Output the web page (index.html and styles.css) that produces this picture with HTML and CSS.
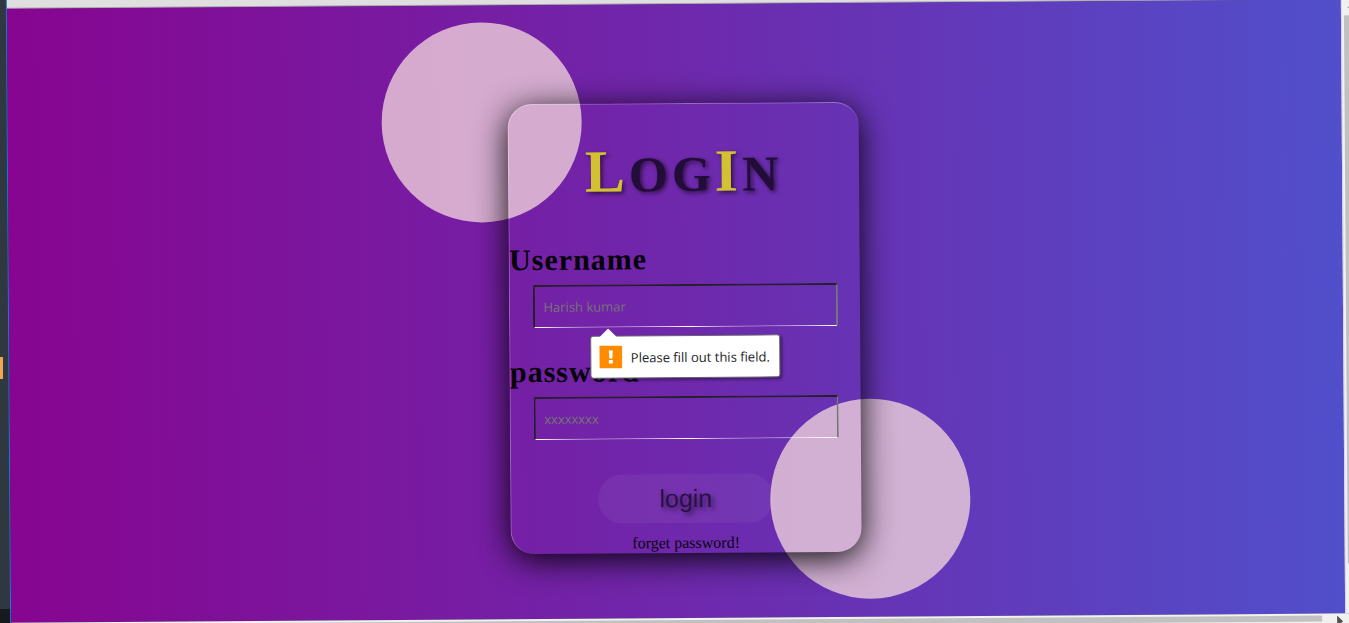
FILE: index.html
```html
<!DOCTYPE html>
<html lang="en">
<head>
<meta charset="utf-8">
<title>Login</title>
<link rel="stylesheet" href="styles.css">
</head>
<body>
<div class="desktop">
  <div class="edge-marker"></div>
  <div class="edge-foot"></div>
</div>
<div class="window">
  <div class="toolbar"></div>
  <main class="page">
    <div class="stage">
      <div class="circle circle-top"></div>
      <div class="circle circle-bottom"></div>
      <form class="card">
        <h1 class="title"><span class="accent">L</span>OG<span class="accent">I</span>N</h1>
        <label class="label" for="username">Username</label>
        <div class="field">
          <input class="input" id="username" type="text" placeholder="Harish kumar" required>
          <div class="tooltip" role="alert">
            <svg class="arrow" width="18" height="9" viewBox="0 0 18 9"><path d="M0 9 9 0 18 9Z" fill="#fff"/></svg>
            <svg class="warn" width="23" height="23" viewBox="0 0 23 23"><rect width="23" height="23" rx="1" fill="#ff8c00"/><path d="M9.500 5h4l-.5 8h-3zM9.500 14.500h4v3.500h-4z" fill="#fff"/></svg>
            <span>Please fill out this field.</span>
          </div>
        </div>
        <label class="label" for="password">password</label>
        <div class="field">
          <input class="input" id="password" type="password" placeholder="xxxxxxxx" required>
        </div>
        <button class="submit" type="submit">login</button>
        <a class="forgot" href="#">forget password!</a>
      </form>
    </div>
  </main>
  <div class="scroll-y"><svg class="up" width="9" height="5" viewBox="0 0 9 5"><path d="M0 5 4.500 0 9 5Z" fill="#a3a3a3"/></svg><div class="thumb-y"></div></div>
  <div class="scroll-x"><div class="thumb-x"></div><svg width="7" height="10" viewBox="0 0 7 10"><path d="M1 0v10l6-4Z" fill="#505050"/></svg></div>
</div>
</body>
</html>
```
FILE: styles.css
```css
* { box-sizing: border-box; }

body {
  margin: 0;
  height: 100vh;
  overflow: hidden;
  position: relative;
  display: flex;
  background: #2f3841;
  font-family: "Liberation Serif", "Times New Roman", serif;
}

.desktop {
  flex: 0 0 8px;
  margin-right: -4px;
  display: flex;
  flex-direction: column;
  justify-content: flex-end;
}
.edge-marker {
  height: 22px;
  width: 3px;
  margin-bottom: 230px;
  background: #eda850;
}
.edge-foot {
  height: 14px;
  width: 12px;
  background: #171a1d;
}

.window {
  flex: 1;
  min-width: 0;
  margin: -12px -12px -12px 0;
  display: grid;
  grid-template-columns: 1fr 18px;
  grid-template-rows: 16px 1fr 17px;
  border-left: 1px solid #0f7fd8;
  transform: rotate(-0.4deg);
}

.toolbar {
  grid-column: 1 / 3;
  background: #dfdfdf;
  border-bottom: 1px solid #a9a0ab;
}

.page {
  background: linear-gradient(90deg, #870590, #6f28ac 50%, #514fcb);
  display: flex;
  justify-content: center;
  align-items: flex-start;
  padding: 99px 0 0 16px;
}

.stage {
  position: relative;
  width: 351px;
}

.circle {
  position: absolute;
  width: 200px;
  height: 200px;
  border-radius: 50%;
  background: rgba(246, 219, 221, 0.75);
}
.circle-top { left: -126px; top: -82px; }
.circle-bottom { left: 260px; top: 297px; }

.card {
  position: relative;
  display: flex;
  flex-direction: column;
  padding-top: 32px;
  border-radius: 24px;
  border-top: 1px solid rgba(255, 255, 255, 0.3);
  border-left: 1px solid rgba(255, 255, 255, 0.3);
  box-shadow: 0 6px 32px rgba(0, 0, 0, 0.95);
}

.title {
  margin: 0 0 32px;
  text-align: center;
  font-size: 50px;
  line-height: 70px;
  letter-spacing: 4px;
  color: #210d37;
  text-shadow: 2px 2px 4px rgba(0, 0, 0, 0.6);
}
.accent {
  font-size: 60px;
  color: #d4c132;
}

.label {
  font-size: 30px;
  line-height: 36px;
  letter-spacing: 1px;
  font-weight: bold;
  color: #050008;
}

.field {
  position: relative;
  margin: 7px 22px 26px 23px;
}
.field + .submit { margin-top: 9px; }

.input {
  display: block;
  width: 100%;
  height: 43px;
  padding: 0 9px;
  background: transparent;
  border: 2px solid;
  border-color: #252028 #767676 #fff #252028;
  border-bottom-width: 1px;
  border-radius: 2px;
  font-family: "Open Sans", "Noto Sans", sans-serif;
  font-size: 13px;
  outline: none;
}
.input::placeholder { color: #757575; opacity: 1; }

.tooltip {
  position: absolute;
  z-index: 2;
  left: 57px;
  top: 51px;
  height: 43px;
  padding: 0 10px 0 8px;
  display: flex;
  align-items: center;
  gap: 9px;
  background: #fff;
  border: 1px solid #6b6470;
  border-radius: 3px;
  box-shadow: 2px 2px 3px rgba(0, 0, 0, 0.4);
  font: 13px "Open Sans", "Noto Sans", sans-serif;
  color: #222;
  white-space: nowrap;
}
.arrow {
  position: absolute;
  left: 8px;
  top: -8px;
}

.submit {
  align-self: center;
  width: 175px;
  height: 49px;
  border: 0;
  border-radius: 24px;
  background: rgba(255, 255, 255, 0.05);
  font: 25px "Liberation Sans", Arial, sans-serif;
  color: #2a1046;
  text-shadow: 3px 3px 4px rgba(0, 0, 0, 0.5);
}

.forgot {
  margin-top: 10px;
  font-size: 16px;
  line-height: 20px;
  text-align: center;
  text-decoration: none;
  color: #0a0410;
}

.scroll-y {
  background: #f1f1f1;
  border-left: 1px solid #d6d2ee;
  padding: 4px 2px 50px;
  display: flex;
  flex-direction: column;
  gap: 7px;
}
.up { margin-left: 3px; }
.thumb-y {
  flex: 1;
  background: #c1c1c1;
}

.scroll-x {
  grid-column: 1 / 3;
  background: #f1f1f1;
  padding: 2px 20px 9px 0;
  display: flex;
  gap: 14px;
}
.thumb-x {
  flex: 1;
  background: #c1c1c1;
}
```
